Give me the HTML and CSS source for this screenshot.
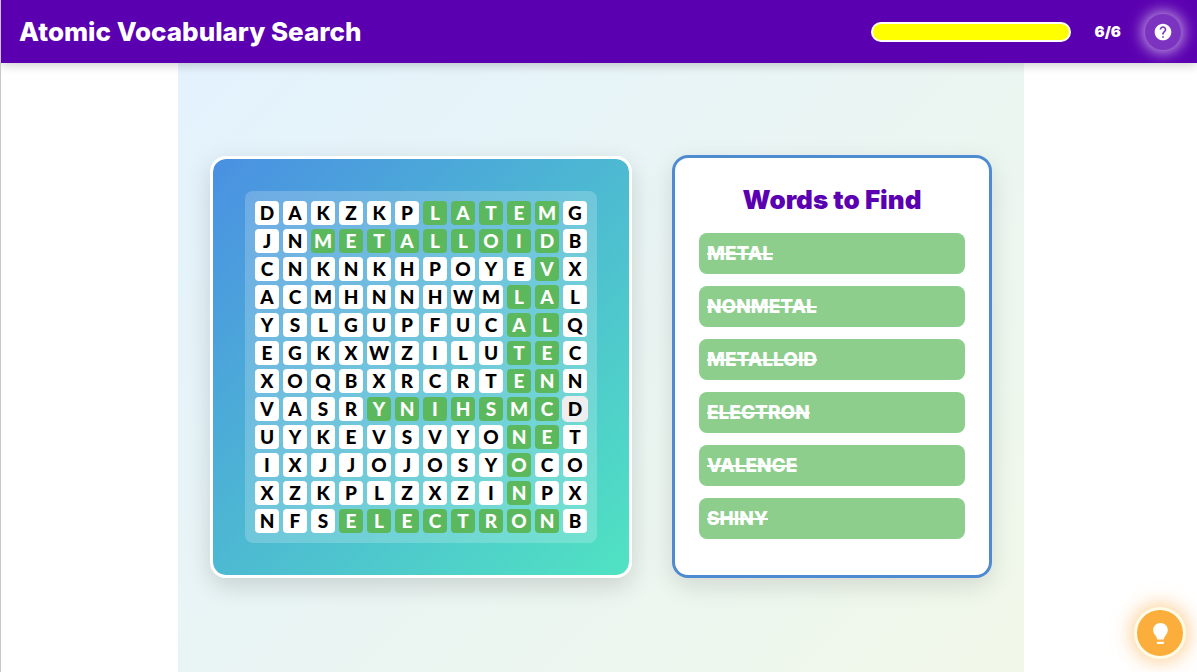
FILE: index.html
```html
<!DOCTYPE html>
<html lang="en">
<head>
<meta charset="utf-8">
<meta name="viewport" content="width=device-width, initial-scale=1">
<title>Atomic Vocabulary Search</title>
<link rel="stylesheet" href="styles.css">
</head>
<body class="page">
<header class="topbar">
  <h1 class="topbar-title">Atomic Vocabulary Search</h1>
  <div class="topbar-tools">
    <div class="progress" role="progressbar" aria-label="Words found" aria-valuemin="0" aria-valuemax="6" aria-valuenow="6"><div class="progress-fill"></div></div>
    <span class="count">6/6</span>
    <button class="help" type="button" aria-label="Help">
      <svg class="help-icon" viewBox="0 0 24 24" aria-hidden="true"><path fill="currentColor" d="M12 2C6.48 2 2 6.48 2 12s4.48 10 10 10 10-4.48 10-10S17.520 2 12 2zm1 17h-2v-2h2v2zm2.070-7.750l-.9.920C13.450 12.900 13 13.500 13 15h-2v-.5c0-1.100.45-2.100 1.170-2.830l1.240-1.260c.37-.36.59-.86.59-1.410 0-1.100-.9-2-2-2s-2 .9-2 2H8c0-2.210 1.790-4 4-4s4 1.790 4 4c0 .88-.36 1.680-.93 2.250z"/></svg>
    </button>
  </div>
</header>
<main class="main">
  <div class="stage">
    <section class="board" aria-label="Letter grid">
      <div class="grid" id="grid"></div>
    </section>
    <section class="panel">
      <h2 class="panel-title">Words to Find</h2>
      <ul class="words">
        <li class="word">METAL</li>
        <li class="word">NONMETAL</li>
        <li class="word">METALLOID</li>
        <li class="word">ELECTRON</li>
        <li class="word">VALENCE</li>
        <li class="word">SHINY</li>
      </ul>
    </section>
  </div>
</main>
<button class="hint" type="button" aria-label="Hint">
  <svg class="hint-icon" viewBox="0 0 24 24" aria-hidden="true"><path fill="currentColor" d="M12 2C8 2 5 5 5 8.700c0 2.700 1.400 4.200 2.500 5.700.8 1.100 1 1.700 1.100 2.600q.1.800.9.800h5q.8 0 .9-.8c.1-.9.300-1.500 1.100-2.600 1.100-1.500 2.500-3 2.500-5.700C19 5 16 2 12 2zM8.500 19.800h7q.4 2.200-1.700 2.200h-3.600q-2.100 0-1.700-2.200z"/></svg>
</button>
<script src="grid.js"></script>
</body>
</html>
```
FILE: styles.css
```css
* { box-sizing: border-box; }

.page {
  margin: 0;
  min-height: 100vh;
  display: flex;
  flex-direction: column;
  border-left: 1px solid #c8c8c8;
  background: #fff;
  font-family: Inter, "Open Sans", sans-serif;
}

.topbar {
  display: flex;
  align-items: center;
  justify-content: space-between;
  min-height: 63px;
  padding: 0 16px 0 18px;
  background: #5b00b0;
  color: #fff;
  box-shadow: 0 2px 10px rgba(0, 0, 0, 0.2);
  z-index: 1;
}

.topbar-title {
  margin: 0;
  font-size: 26px;
  line-height: 35px;
  font-weight: 800;
}

.topbar-tools {
  display: flex;
  align-items: center;
  gap: 24px;
}

.progress {
  width: 200px;
  height: 20px;
  padding: 2px;
  border-radius: 10px;
  background: #fff;
}

.progress-fill {
  height: 100%;
  border-radius: 8px;
  background: #ff0;
}

.count {
  font-size: 15px;
  font-weight: 900;
}

.help {
  display: flex;
  align-items: center;
  justify-content: center;
  width: 36px;
  height: 36px;
  padding: 0;
  border: 0;
  border-radius: 50%;
  background: #7c33c0;
  color: #fff;
  box-shadow: 0 0 15px 2px rgba(255, 255, 255, 0.7);
}

.help-icon { width: 20px; height: 20px; }

.main {
  flex: 1;
  display: flex;
  justify-content: center;
  padding-left: 4px;
}

.stage {
  display: flex;
  align-items: center;
  gap: 40px;
  padding: 0 32px 2px;
  background: linear-gradient(135deg, #e3f2fd, #f1f8e9);
}

.board {
  padding: 32px;
  border: 3px solid #fff;
  border-radius: 16px;
  background: linear-gradient(135deg, #4a90e2, #50e3c2) padding-box;
  box-shadow: 0 8px 24px rgba(0, 0, 0, 0.15);
}

.grid {
  display: grid;
  grid-template-columns: repeat(12, 24px);
  grid-auto-rows: 24px;
  gap: 4px;
  padding: 10px;
  border-radius: 8px;
  background: rgba(255, 255, 255, 0.2);
}

.cell {
  padding: 0;
  border: 0;
  border-radius: 4px;
  background: #fff;
  color: #000;
  font-family: Lato, sans-serif;
  font-size: 19px;
  line-height: 24px;
  font-weight: 900;
  text-align: center;
}

.cell-found { background: #5cb85c; color: #fff; }

.cell-active {
  background: #eee;
  outline: 1px solid #eee;
}

.panel {
  width: 320px;
  padding: 24px;
  border: 3px solid #4f8bd0;
  border-radius: 16px;
  background: #fff;
  box-shadow: 0 8px 24px rgba(0, 0, 0, 0.12);
}

.panel-title {
  margin: 0 0 16px;
  color: #5b00b0;
  font-size: 26px;
  line-height: 35px;
  font-weight: 900;
  text-align: center;
}

.words {
  margin: 0;
  padding: 0;
  list-style: none;
}

.word {
  margin-bottom: 12px;
  padding: 8px;
  border-radius: 8px;
  background: #8dce8d;
  color: #fff;
  font-size: 19px;
  line-height: 25px;
  font-weight: 800;
  text-decoration: line-through 2px;
}

.hint {
  position: fixed;
  right: 11px;
  bottom: 13px;
  display: flex;
  align-items: center;
  justify-content: center;
  width: 52px;
  height: 52px;
  padding: 0;
  border: 3px solid #fffbe6;
  border-radius: 50%;
  background: #fbae3c;
  color: #fff;
  box-shadow: 0 0 20px 2px rgba(251, 165, 60, 0.6);
}

.hint-icon { width: 25px; height: 25px; }
```
FILE: grid.js
```js
// Each row: its letters, then a mask where "x" is part of a found word and "a" is the active cell.
const rows = [
  ["DAKZKPLATEMG", "......xxxxx."],
  ["JNMETALLOIDB", "..xxxxxxxxx."],
  ["CNKNKHPOYEVX", "..........x."],
  ["ACMHNNHWMLAL", ".........xx."],
  ["YSLGUPFUCALQ", ".........xx."],
  ["EGKXWZILUTEC", ".........xx."],
  ["XOQBXRCRTENN", ".........xx."],
  ["VASRYNIHSMCD", "....xxxxxxxa"],
  ["UYKEVSVYONET", ".........xx."],
  ["IXJJOJOSYOCO", ".........x.."],
  ["XZKPLZXZINPX", ".........x.."],
  ["NFSELECTRONB", "...xxxxxxxx."]
];
const states = { x: " cell-found", a: " cell-active" };
const grid = document.getElementById("grid");
for (const [letters, mask] of rows) {
  [...letters].forEach((letter, i) => {
    const cell = document.createElement("button");
    cell.type = "button";
    cell.className = "cell" + (states[mask[i]] || "");
    cell.textContent = letter;
    grid.append(cell);
  });
}
```
